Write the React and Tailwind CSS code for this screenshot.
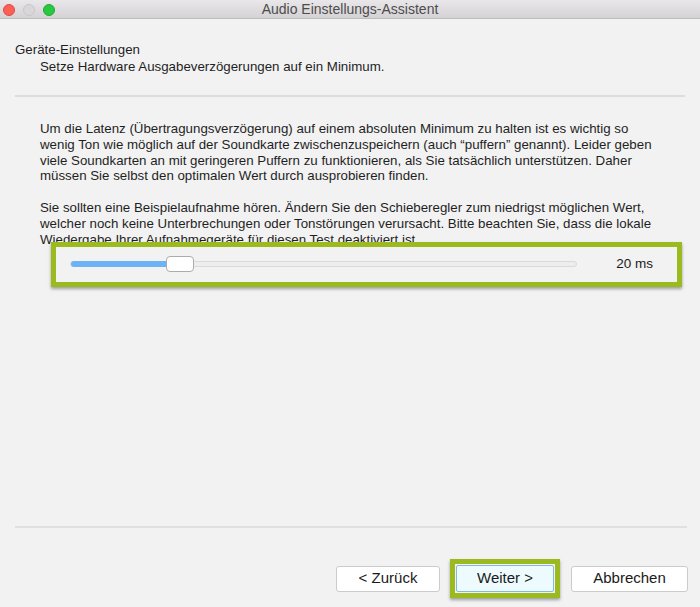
import React from 'react';

const font = "font-['Liberation_Sans','Helvetica_Neue',Arial,sans-serif]";

const intro = [
  'Um die Latenz (Übertragungsverzögerung) auf einem absoluten Minimum zu halten ist es wichtig so',
  'wenig Ton wie möglich auf der Soundkarte zwischenzuspeichern (auch “puffern” genannt). Leider geben',
  'viele Soundkarten an mit geringeren Puffern zu funktionieren, als Sie tatsächlich unterstützen. Daher',
  'müssen Sie selbst den optimalen Wert durch ausprobieren finden.',
];

const hint = [
  'Sie sollten eine Beispielaufnahme hören. Ändern Sie den Schieberegler zum niedrigst möglichen Wert,',
  'welcher noch keine Unterbrechungen oder Tonstörungen verursacht. Bitte beachten Sie, dass die lokale',
  'Wiedergabe Ihrer Aufnahmegeräte für diesen Test deaktiviert ist.',
];

function TitleBar() {
  return (
    <div className="h-[19px] grid grid-cols-[1fr_auto_1fr] items-center bg-gradient-to-b from-[#e9e7e9] to-[#d4d2d4] border-b border-[#bdbbbd]">
      <div className="flex items-center gap-[8px] pl-[3px]">
        <span className="w-[12px] h-[12px] rounded-full bg-[#fc5f57] border border-[#e3483f]" />
        <span className="w-[12px] h-[12px] rounded-full bg-[#d9d7d9] border border-[#c8c6c8]" />
        <span className="w-[12px] h-[12px] rounded-full bg-[#2ac840] border border-[#1faa32]" />
      </div>
      <div className="text-[14px] leading-[19px] text-[#4d4d4d]">Audio Einstellungs-Assistent</div>
      <div />
    </div>
  );
}

function LatencySlider({ value }) {
  const pct = 19;
  return (
    <div className="relative z-10 -mt-[6px] ml-[36px] mr-[3px] h-[45px] flex items-center bg-[#f2f2f2] border-[5px] border-[#9bba1f] shadow-[0_2px_3px_rgba(0,0,0,0.35)] pl-[14px] pr-[24px]">
      <div className="relative w-[507px] h-[6px] rounded-full bg-[#ededed] border border-[#dadada]">
        <div className="absolute left-0 top-[-1px] h-[6px] rounded-l-full bg-[#6db2f4]" style={{ width: `${pct}%` }} />
        <div
          className="absolute top-[-6px] w-[28px] h-[16px] rounded-[4px] bg-white border border-[#ababab]"
          style={{ left: `${pct * 5.07 - 1}px` }}
        />
      </div>
      <div className="ml-auto text-[13.5px] text-[#1a1a1a]">{value} ms</div>
    </div>
  );
}

function Lines({ lines, className }) {
  return (
    <p className={className}>
      {lines.map((l) => (
        <span key={l} className="block whitespace-nowrap">{l}</span>
      ))}
    </p>
  );
}

export default function App() {
  return (
    <div className={`w-[700px] h-[607px] bg-[#f2f2f2] flex flex-col overflow-hidden ${font}`}>
      <TitleBar />
      <div className="flex-1 flex flex-col px-[15px] text-[13.3px] text-[#1f1f1f]">
        <div className="pt-[22px] leading-[17px]">
          <div>Geräte-Einstellungen</div>
          <div className="pl-[25px]">Setze Hardware Ausgabeverzögerungen auf ein Minimum.</div>
        </div>
        <div className="mt-[20px] h-[2px] bg-[#dddddd]" />

        <div className="pl-[25px] pr-[20px] leading-[15.8px]">
          <Lines className="mt-[24px]" lines={intro} />
          <Lines className="mt-[16px]" lines={hint} />
        </div>

        <LatencySlider value={20} />

        <div className="flex-1" />
        <div className="h-[2px] bg-[#e0e0e0] mr-[-2px]" />
        <div className="flex items-center justify-end mt-[31px] mb-[9px] mr-[-3px] text-[15px] text-[#1a1a1a]">
          <button className="w-[104px] h-[26px] bg-white border border-[#cbcbcb] rounded-[3px]">&lt; Zurück</button>
          <div className="ml-[10px] border-[5px] border-[#9bba1f] p-px shadow-[0_2px_3px_rgba(0,0,0,0.35)]">
            <button className="block w-[98px] h-[27px] bg-[#eefbfe] border border-[#86b6e6] rounded-[2px]">Weiter &gt;</button>
          </div>
          <button className="ml-[11px] w-[117px] h-[26px] bg-white border border-[#cbcbcb] rounded-[3px]">Abbrechen</button>
        </div>
      </div>
    </div>
  );
}
